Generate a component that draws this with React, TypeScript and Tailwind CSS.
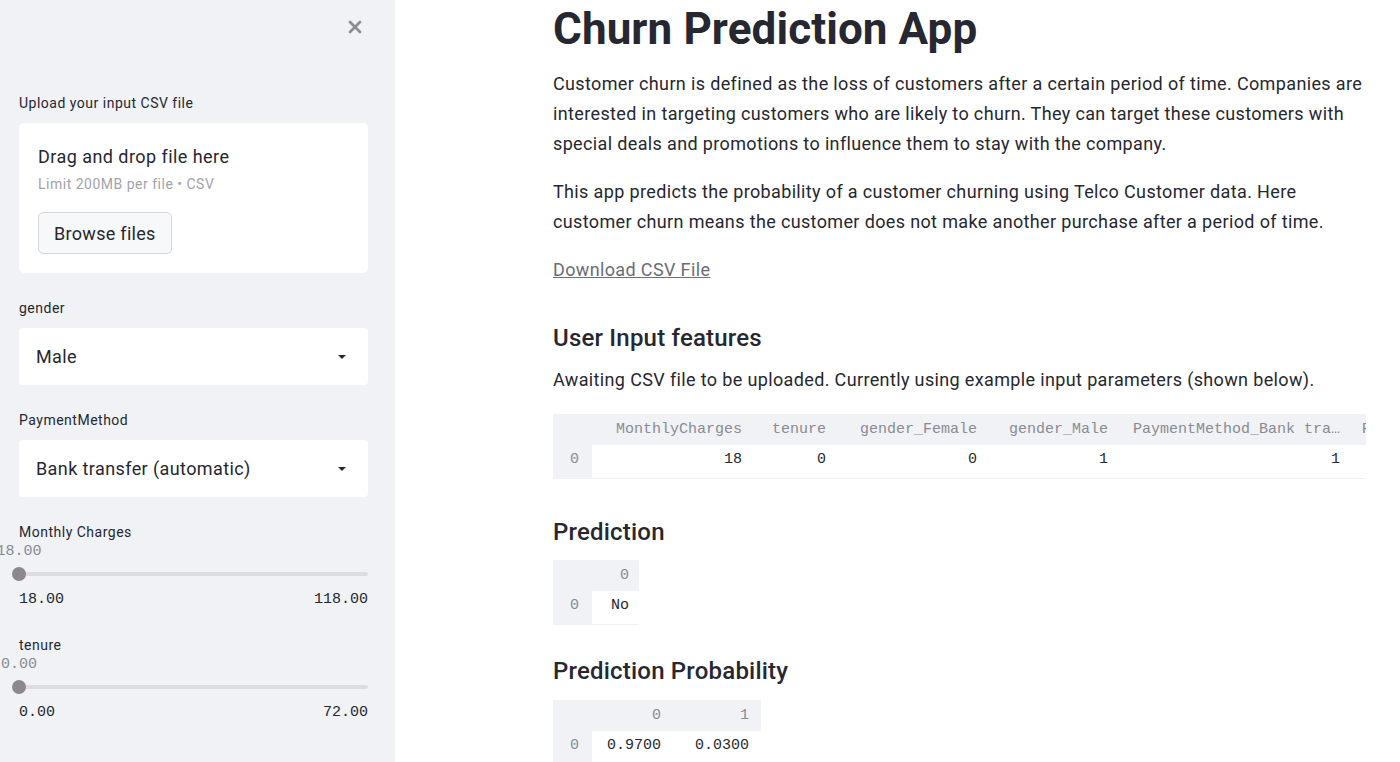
import React from 'react';
import { X } from 'lucide-react';

const sans = { fontFamily: 'Roboto, "Noto Sans", Arial, sans-serif' };
const mono = { fontFamily: '"Liberation Mono", "DejaVu Sans Mono", monospace' };

const Caret = () => (
  <svg width="10" height="6" viewBox="0 0 10 6" className="text-[#262730]">
    <path d="M1 1h8L5 5z" fill="currentColor" />
  </svg>
);

const SelectBox = ({ label, value }: { label: string; value: string }) => (
  <div>
    <div className="text-[14px] leading-[20px] tracking-[0.5px] text-[#262730]">{label}</div>
    <div className="mt-[10px] h-[57px] bg-white rounded-[4px] flex items-center justify-between pl-[17px] pr-[21px]">
      <span className="text-[18px] tracking-[0.4px] text-[#262730]">{value}</span>
      <Caret />
    </div>
  </div>
);

const SliderBox = ({ label, value, min, max }: { label: string; value: string; min: string; max: string }) => (
  <div>
    <div className="text-[14px] leading-[20px] tracking-[0.5px] text-[#262730]">{label}</div>
    <div className="relative h-[16px] mt-[2px]">
      <span
        className="absolute top-0 -translate-x-1/2 left-0 text-[15px] leading-[16px] text-[#8a8a93]"
        style={mono}
      >
        {value}
      </span>
    </div>
    <div className="relative h-[14px] mt-[7px] flex items-center">
      <div className="h-[4px] w-full bg-[#dcdde2] rounded-full" />
      <div className="absolute left-[-7px] top-0 w-[14px] h-[14px] rounded-full bg-[#8d888f]" />
    </div>
    <div className="flex justify-between mt-[11px] text-[15px] leading-[16px] text-[#262730]" style={mono}>
      <span>{min}</span>
      <span>{max}</span>
    </div>
  </div>
);

type Col = { name: string; width: number; align?: 'left' | 'right'; pad?: number };

const DataTable = ({ cols, rows }: { cols: Col[]; rows: string[][] }) => (
  <div className="overflow-hidden text-[15px]" style={mono}>
    <div className="flex">
      <div className="w-[39px] shrink-0 bg-[#f0f2f6] h-[31px]" />
      {cols.map((c) => (
        <div
          key={c.name}
          className={`shrink-0 bg-[#f0f2f6] h-[31px] leading-[31px] text-[#8a8a93] whitespace-nowrap overflow-hidden ${c.align === 'left' ? 'text-left' : 'text-right'}`}
          style={c.align === 'left' ? { width: c.width, paddingLeft: 7 } : { width: c.width, paddingRight: c.pad ?? 15 }}
        >
          {c.name}
        </div>
      ))}
    </div>
    {rows.map((r, i) => (
      <div key={i} className="flex">
        <div className="w-[39px] shrink-0 bg-[#f0f2f6] h-[34px] leading-[30px] text-right pr-[13px] text-[#8a8a93] border-b border-[#eef0f3]">
          {i}
        </div>
        {r.map((v, j) => (
          <div
            key={j}
            className="shrink-0 bg-white h-[34px] leading-[30px] text-right text-[#262730] border-b border-[#eef0f3] whitespace-nowrap"
            style={{ width: cols[j].width, paddingRight: cols[j].pad ?? 15 }}
          >
            {v}
          </div>
        ))}
      </div>
    ))}
  </div>
);

export default function App() {
  return (
    <div className="flex h-[762px] w-[1400px] overflow-hidden bg-white text-[#262730]" style={sans}>
      {/* sidebar */}
      <aside className="w-[395px] shrink-0 bg-[#f0f2f6] pl-[19px] pr-[27px] overflow-hidden">
        <div className="flex justify-end pt-[17px] pr-[3px]">
          <X size={20} strokeWidth={3.2} className="text-[#8c8c95]" />
        </div>
        <div className="mt-[56px] text-[14px] leading-[20px] tracking-[0.5px]">Upload your input CSV file</div>
        <div className="mt-[10px] h-[150px] bg-white rounded-[5px] pl-[19px] pt-[21px]">
          <div className="text-[18px] leading-[26px] tracking-[0.45px]">Drag and drop file here</div>
          <div className="text-[14px] leading-[20px] tracking-[0.5px] text-[#a3a3ab] mt-[4px]">Limit 200MB per file • CSV</div>
          <button className="mt-[18px] h-[42px] px-[15px] border border-[#d6d7dc] rounded-[5px] bg-[#f7f8fa] text-[18px] tracking-[0.3px] text-[#262730]">
            Browse files
          </button>
        </div>
        <div className="mt-[25px]">
          <SelectBox label="gender" value="Male" />
        </div>
        <div className="mt-[25px]">
          <SelectBox label="PaymentMethod" value="Bank transfer (automatic)" />
        </div>
        <div className="mt-[25px]">
          <SliderBox label="Monthly Charges" value="18.00" min="18.00" max="118.00" />
        </div>
        <div className="mt-[27px]">
          <SliderBox label="tenure" value="0.00" min="0.00" max="72.00" />
        </div>
      </aside>

      {/* main */}
      <main className="flex-1 pl-[158px] pr-[34px] overflow-hidden">
        <h1 className="text-[44px] font-bold leading-[53px] mt-[3px] tracking-[0.1px]">Churn Prediction App</h1>
        <div className="tracking-[0.36px]">
          <p className="mt-[13px] text-[18px] leading-[30px]">
            <span className="block whitespace-nowrap">Customer churn is defined as the loss of customers after a certain period of time. Companies are</span>
            <span className="block whitespace-nowrap">interested in targeting customers who are likely to churn. They can target these customers with</span>
            <span className="block whitespace-nowrap">special deals and promotions to influence them to stay with the company.</span>
          </p>
          <p className="mt-[18px] text-[18px] leading-[30px]">
            <span className="block whitespace-nowrap">This app predicts the probability of a customer churning using Telco Customer data. Here</span>
            <span className="block whitespace-nowrap">customer churn means the customer does not make another purchase after a period of time.</span>
          </p>
          <a className="block mt-[18px] text-[18px] leading-[30px] text-[#6c6c75] underline">Download CSV File</a>

          <h3 className="mt-[35px] text-[24px] font-medium leading-[36px] tracking-[0.2px]">User Input features</h3>
          <p className="mt-[9px] text-[18px] leading-[30px] whitespace-nowrap">
            Awaiting CSV file to be uploaded. Currently using example input parameters (shown below).
          </p>
        </div>
        <div className="mt-[19px] w-[813px]">
          <DataTable
            cols={[
              { name: 'MonthlyCharges', width: 165 },
              { name: 'tenure', width: 84 },
              { name: 'gender_Female', width: 151 },
              { name: 'gender_Male', width: 131 },
              { name: 'PaymentMethod_Bank tra…', width: 232 },
              { name: 'PaymentMethod_Credit', width: 200, align: 'left' },
            ]}
            rows={[['18', '0', '0', '1', '1', '0']]}
          />
        </div>

        <h3 className="mt-[35px] text-[24px] font-medium leading-[36px] tracking-[0.2px]">Prediction</h3>
        <div className="mt-[10px] w-[86px]">
          <DataTable cols={[{ name: '0', width: 47, pad: 10 }]} rows={[['No']]} />
        </div>

        <h3 className="mt-[28px] text-[24px] font-medium leading-[36px] tracking-[0.2px]">Prediction Probability</h3>
        <div className="mt-[11px] w-[208px]">
          <DataTable
            cols={[
              { name: '0', width: 84 },
              { name: '1', width: 85, pad: 12 },
            ]}
            rows={[['0.9700', '0.0300']]}
          />
        </div>
      </main>
    </div>
  );
}
